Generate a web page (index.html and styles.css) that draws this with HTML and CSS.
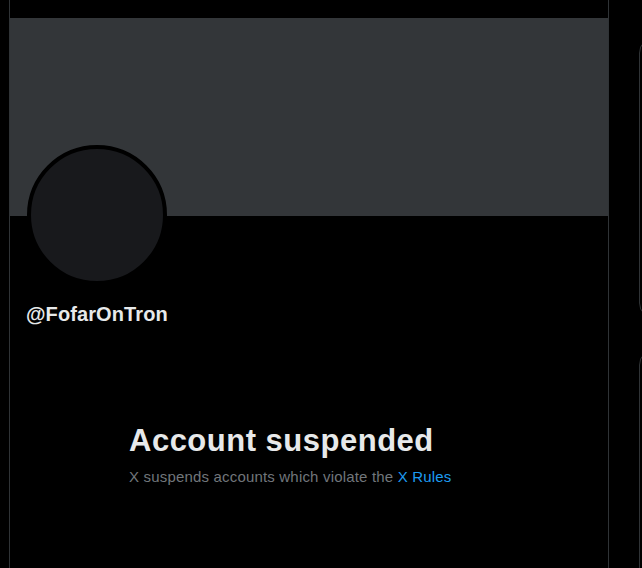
FILE: index.html
```html
<!DOCTYPE html>
<html lang="en">
<head>
<meta charset="utf-8">
<title>@FofarOnTron / X</title>
<link rel="stylesheet" href="styles.css">
</head>
<body>
<div class="layout">
  <main class="main">
    <div class="banner"></div>
    <div class="profile">
      <div class="avatar"></div>
      <div class="handle">@FofarOnTron</div>
    </div>
    <section class="empty">
      <h1 class="empty-title">Account suspended</h1>
      <p class="empty-text">X suspends accounts which violate the <a class="link" href="#">X Rules</a></p>
    </section>
  </main>
  <aside class="sidebar">
    <div class="card card-first"></div>
    <div class="card card-second"></div>
  </aside>
</div>
</body>
</html>
```
FILE: styles.css
```css
html, body {
  margin: 0;
  padding: 0;
  background: #000;
}
body {
  font-family: "Liberation Sans", Arial, sans-serif;
  color: #e7e9ea;
}
.layout {
  display: flex;
  padding-left: 9px;
  width: 633px;
  height: 568px;
  overflow: hidden;
}
.main {
  width: 598px;
  flex: none;
  border-left: 1px solid #2f3336;
  border-right: 1px solid #2f3336;
  padding-top: 18px;
}
.banner {
  height: 198px;
  background: #333639;
}
.profile {
  padding: 0 16px;
}
.avatar {
  width: 132px;
  height: 132px;
  margin-top: -71px;
  margin-left: 1px;
  border: 4px solid #000;
  border-radius: 50%;
  background: #18191c;
}
.handle {
  margin-top: 17px;
  font-size: 20px;
  line-height: 24px;
  font-weight: 700;
  letter-spacing: 0.1px;
  color: #e7e9ea;
}
.empty {
  margin-left: 119px;
  margin-top: 97px;
}
.empty-title {
  margin: 0;
  font-size: 31px;
  line-height: 36px;
  font-weight: 700;
  letter-spacing: 0.5px;
  color: #e7e9ea;
}
.empty-text {
  margin: 8px 0 0;
  font-size: 15px;
  line-height: 20px;
  letter-spacing: 0.18px;
  color: #71767b;
}
.link {
  color: #1d9bf0;
  text-decoration: none;
}
.sidebar {
  margin-left: 30px;
  width: 350px;
  flex: none;
}
.card {
  border: 1px solid #2f3336;
  border-radius: 16px;
}
.card-first {
  margin-top: 37px;
  height: 280px;
}
.card-second {
  margin-top: 30px;
  height: 400px;
}
```
